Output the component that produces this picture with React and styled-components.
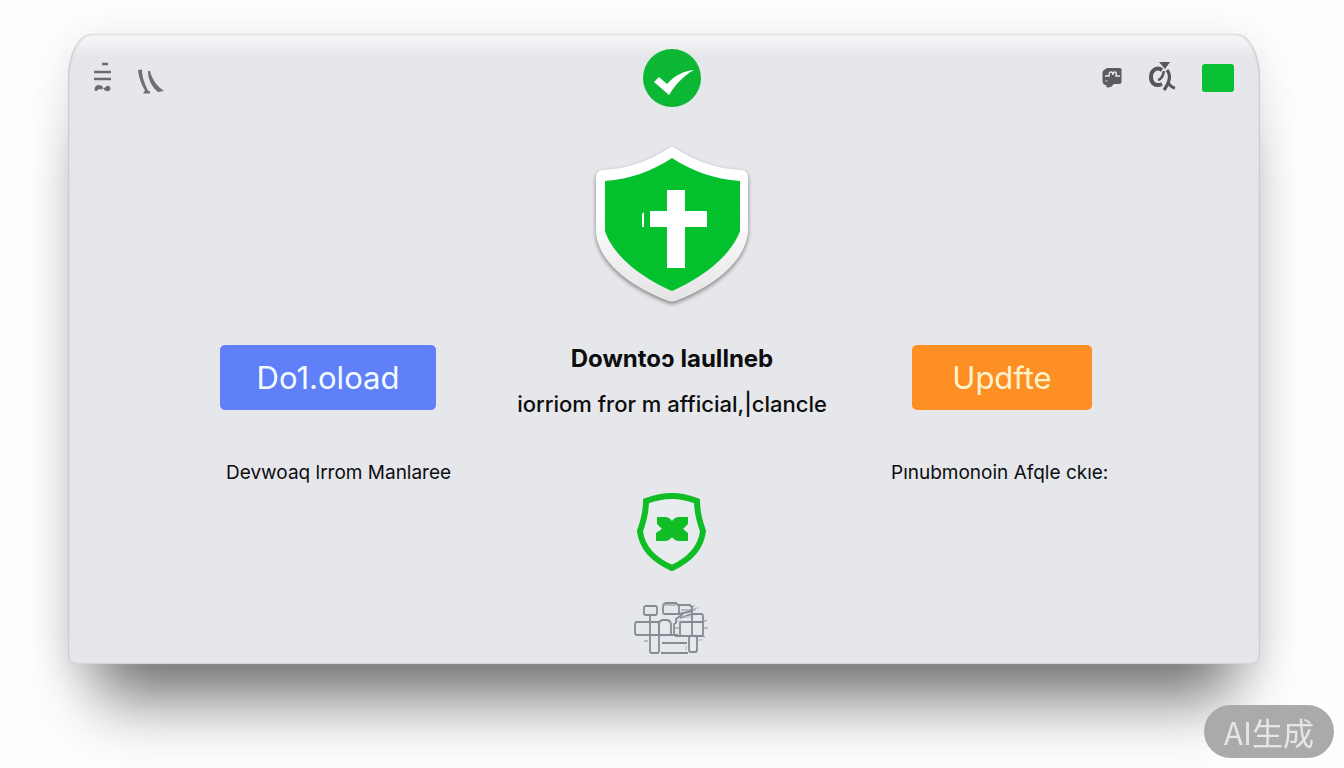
import React from "react";
import styled, { createGlobalStyle } from "styled-components";

const GlobalStyle = createGlobalStyle`
  * {
    box-sizing: border-box;
  }
  body {
    margin: 0;
    background: #fefefe;
    color: #0c0d0f;
    font-family: Inter, "Liberation Sans", "Noto Sans CJK SC", sans-serif;
  }
  svg {
    display: block;
  }
`;

const Page = styled.div`
  min-height: 100vh;
  padding: 34px 84px 104px 68px;
  overflow: hidden;
`;

const Card = styled.main`
  display: flex;
  flex-direction: column;
  align-items: center;
  padding: 15px 10px 8px 26px;
  border-radius: 24px 24px 8px 8px / 44px 44px 8px 8px;
  background: linear-gradient(#f6f7f8 0, #f1f2f4 10px, #e6e7eb 20px, #e6e7eb 100%);
  box-shadow:
    inset 1px 0 2px #c4c5c8,
    inset -1px 0 2px #c4c5c8,
    0 0 1px #d0d1d3,
    0 66px 60px -30px rgba(0, 0, 0, 0.52),
    0 6px 44px rgba(0, 0, 0, 0.11);
`;

const TopBar = styled.header`
  display: grid;
  grid-template-columns: 1fr auto 1fr;
  align-items: center;
  width: 100%;
`;

const IconGroup = styled.div`
  display: flex;
  align-items: center;
  gap: ${(props) => (props.$end ? "26px" : "24px")};
  justify-content: ${(props) => (props.$end ? "flex-end" : "flex-start")};
  padding-right: ${(props) => (props.$end ? "16px" : "0")};
`;

const IconButton = styled.button`
  padding: 0;
  border: 0;
  background: none;
  cursor: pointer;
`;

const GreenButton = styled(IconButton)`
  width: 32px;
  height: 28px;
  border-radius: 3px;
  background: #08c032;
`;

const BigShield = styled.svg`
  margin-top: 39px;
  overflow: visible;
  filter: drop-shadow(0 2px 2px rgba(0, 0, 0, 0.45));
`;

const Columns = styled.section`
  display: grid;
  grid-template-columns: 1fr 340px 1fr;
  width: 100%;
  margin-top: 43px;
`;

const Action = styled.div`
  display: flex;
  flex-direction: column;
  align-items: center;
  gap: 51px;
  width: ${(props) => props.$width};
  justify-self: ${(props) => props.$side};
  margin: ${(props) => (props.$side === "end" ? "0 66px 0 0" : "0 0 0 49px")};
`;

const ActionButton = styled.button`
  width: ${(props) => props.$width};
  height: 65px;
  padding: 0;
  border: 0;
  border-radius: 5px;
  background: ${(props) => props.$color};
  color: ${(props) => props.$text};
  font-family: inherit;
  font-size: 31px;
  cursor: pointer;
`;

const Caption = styled.p`
  align-self: flex-start;
  margin: 0;
  padding-left: ${(props) => props.$indent || "0"};
  font-size: 19px;
  line-height: 24px;
  white-space: nowrap;
`;

const Message = styled.div`
  display: flex;
  flex-direction: column;
  align-items: center;
  gap: 19px;
  white-space: nowrap;
`;

const Title = styled.h1`
  margin: 0;
  font-size: 24px;
  line-height: 28px;
  font-weight: 700;
`;

const Subtitle = styled.p`
  margin: 0;
  font-size: 22px;
  line-height: 24px;
  font-weight: 500;
`;

const SmallShield = styled.svg`
  margin-top: 8px;
`;

const Network = styled.svg`
  margin-top: 31px;
`;

const Badge = styled.div`
  position: fixed;
  right: 10px;
  bottom: 10px;
  padding: 0 20px;
  border-radius: 27px;
  background: #aaaaaa;
  color: #e6e6e6;
  font-family: "Noto Sans CJK SC", sans-serif;
  font-size: 31px;
  line-height: 53px;
`;

function MenuIcon() {
  return (
    <svg width="19" height="34" viewBox="0 0 19 34">
      <path d="M8 3h6M0 11h17M-1 18h18" fill="none" stroke="#6b6c6f" strokeWidth="2.400" />
      <path d="M1 30c-2-6 5-8 8-4l-1 3c-2-2-4-1-5 1z" fill="#6b6c6f" />
      <path d="M9 27c2 1 3-3 6-2 3 2 1 6-2 5-2 0-3-1-4-3z" fill="#6b6c6f" />
    </svg>
  );
}

function SlashIcon() {
  return (
    <svg width="27" height="34" viewBox="0 0 27 34" fill="#6f7073">
      <g transform="translate(1 8)">
        <path d="M0 1l4-.5c0 8 3 15 6 21l2 1v2H5l2-3C3 15 1 9 0 1z" />
        <path d="M10 2h2c2 9 8 16 14 20l-6 1C14 18 10 11 10 2z" />
      </g>
    </svg>
  );
}

function ChatIcon() {
  return (
    <svg width="20" height="20" viewBox="0 0 20 20">
      <path d="M2 2l3-2h13c1 0 2 1 1.500 3v10c0 3-1 3-4 3h-3c-2 0-2 3-4 3-4 1-5 0-4-2-3 0-4-2-4-5V6c0-2 0-3 1.500-4z" fill="#5b5c60" />
      <path d="M3 8h4q0-4 2-4 2 0 2 3 0-3 2-3 2 0 1 4h4" fill="none" stroke="#e6e7eb" strokeWidth="1.500" />
      <path d="M3 13h3" stroke="#b5b6b9" strokeWidth="1" />
    </svg>
  );
}

function SearchIcon() {
  return (
    <svg width="28" height="32" viewBox="0 0 28 32" fill="none" stroke="#55565a">
      <path d="M14 8C8 4 3 9 3 15s4 10 11 7" strokeWidth="4" />
      <path d="M11 0h11l-5 7z" fill="#55565a" stroke="none" />
      <path d="M10 18c4-1 5-4 6-9" strokeWidth="2.400" />
      <path d="M19 8c5 6 2 13-3 20M20 20q2 5 7 6" strokeWidth="3.200" />
    </svg>
  );
}

function CheckIcon() {
  return (
    <svg width="58" height="58" viewBox="0 0 58 58">
      <circle cx="29" cy="29" r="29" fill="#0cb833" />
      <path d="M11 33l5-5 8 7c7-8 16-13 27-14-11 6-18 14-25 25z" fill="#fff" />
    </svg>
  );
}

function App() {
  return (
    <Page>
      <GlobalStyle />
      <Card>
        <TopBar>
          <IconGroup>
            <IconButton aria-label="Menu">
              <MenuIcon />
            </IconButton>
            <IconButton aria-label="Back">
              <SlashIcon />
            </IconButton>
          </IconGroup>
          <CheckIcon />
          <IconGroup $end>
            <IconButton aria-label="Messages">
              <ChatIcon />
            </IconButton>
            <IconButton aria-label="Search">
              <SearchIcon />
            </IconButton>
            <GreenButton aria-label="Status" />
          </IconGroup>
        </TopBar>

        <BigShield width="154" height="156" viewBox="0 0 154 156">
          <defs>
            <linearGradient id="rim" x1="0" y1="0" x2="0" y2="1">
              <stop offset="0.4" stopColor="#ffffff" />
              <stop offset="1" stopColor="#e4e4e5" />
            </linearGradient>
          </defs>
          <path
            d="M74 2q3-2 6 0c20 13 42 21 66 22q7 1 7 7v55c-3 30-34 54-70 68q-6 3-12 0C35 140 3 116 1 86V31q0-6 7-7c24-1 46-9 66-22z"
            fill="url(#rim)"
          />
          <path
            d="M77 12c20 13 42 21 68 23v50c-9 25-38 47-68 60C47 132 18 110 10 85V35c26-2 47-10 67-23z"
            fill="#03c12d"
          />
          <path d="M72 44h18v21h22v16H90v41H72V81H55V65h17z" fill="#fff" />
          <path d="M47 68l2-2v15h-2z" fill="#fff" />
        </BigShield>

        <Columns>
          <Action $width="216px" $side="end">
            <ActionButton $width="216px" $color="#5f80f8" $text="#f4fbff">
              Do1.oload
            </ActionButton>
            <Caption $indent="6px">Devwoaq lrrom Manlaree</Caption>
          </Action>
          <Message>
            <Title>Downtoɔ laullneb</Title>
            <Subtitle>iorriom fror m afficial,|clancle</Subtitle>
          </Message>
          <Action $width="222px" $side="start">
            <ActionButton $width="180px" $color="#fd8f24" $text="#fff3cf">
              Updfte
            </ActionButton>
            <Caption>Pınubmonoin Afqle ckıe:</Caption>
          </Action>
        </Columns>

        <SmallShield width="70" height="78" viewBox="0 0 70 78">
          <path
            d="M35 3c10 0 17 2 25 5 0 11 2 19 6 30-2 18-14 29-31 37C17 67 5 56 3 38 7 27 9 19 9 8c8-3 16-5 26-5z"
            fill="#e9ecee"
            stroke="#10bd24"
            strokeWidth="6"
          />
          <path
            d="M20 24h8q4 0 7 4 3-4 7-4h9v7l-5 5 5 4v8h-9q-4 0-7-4-3 4-7 4h-9v-8l6-4-5-5z"
            fill="#10bd24"
          />
        </SmallShield>

        <Network width="76" height="54" viewBox="0 0 76 54" fill="none" stroke="#858b94" strokeWidth="1.800">
          <rect x="10" y="4" width="13" height="9" rx="2" />
          <path d="M16 13v7M25 20H3q-2 0-2 2v8q0 3 2 3h22" />
          <rect x="16" y="20" width="9" height="31" rx="2" />
          <path d="M25 33V22q0-4 5-4h2q5 0 5 5v10H25M37 33h7" />
          <path d="M31 1h11l2 2h11l3 2M31 1q-2 1-2 4v5q0 2 2 2h14V3M45 12l13-3" />
          <path d="M46 16l12-4h9q2 0 2 2v18q0 2-2 2H48q-2 0-2-2V20M46 20h23M58 4v30" />
          <path d="M49 12l-7 5v4l-2 1v9q0 3 3 3h5" />
          <rect x="55" y="34" width="8" height="16" rx="2" />
          <path d="M28 41h25M27 51h27" />
          <path d="M30 3h12M56 2l3 6M60 3l-4 6M69 20l4-2M69 26h5M67 34l4 1M10 39h4M41 26h5M47 8h14v-2" strokeWidth="1" />
          <path d="M61 6h4M43 19h6M49 15h8M64 38h5M52 44v4" strokeWidth="1" stroke="#b1b5bb" />
        </Network>
      </Card>
      <Badge>AI生成</Badge>
    </Page>
  );
}

export default App;
